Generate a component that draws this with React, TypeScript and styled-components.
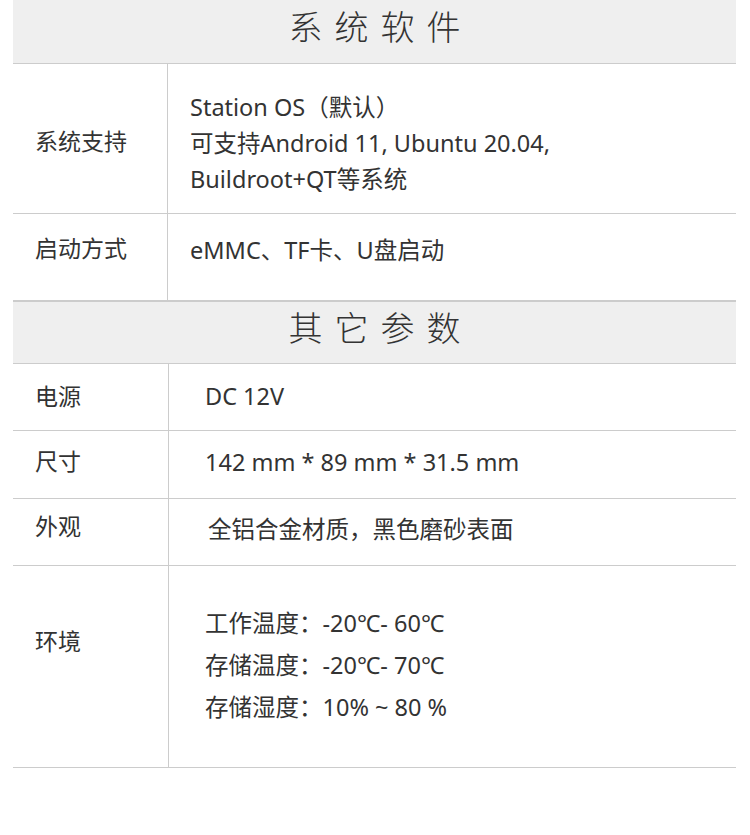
import React from 'react';
import styled, { createGlobalStyle } from 'styled-components';

const GlobalStyle = createGlobalStyle`
  html, body {
    margin: 0;
    padding: 0;
    background: #ffffff;
  }
  body {
    font-family: "Noto Sans", "Noto Sans CJK SC", sans-serif;
    color: #333333;
  }
`;

const Page = styled.div`
  width: 750px;
  height: 835px;
  padding: 0 14px 0 13px;
  box-sizing: border-box;
`;

const SectionHeader = styled.div<{ $top?: boolean; $height: number }>`
  height: ${(p) => p.$height}px;
  box-sizing: border-box;
  display: flex;
  align-items: center;
  justify-content: center;
  background: #efefef;
  border-top: ${(p) => (p.$top ? '1px solid #cccccc' : 'none')};
  border-bottom: 1px solid #cccccc;
  font-family: "Noto Sans CJK SC", sans-serif;
  font-size: 34px;
  font-weight: 300;
  letter-spacing: 12px;
  padding: 0 0 12px 12px;
  color: #333333;
`;

const Row = styled.div<{ $height: number; $labelWidth: number }>`
  display: grid;
  grid-template-columns: ${(p) => p.$labelWidth}px 1fr;
  height: ${(p) => p.$height}px;
  border-bottom: 1px solid #cccccc;
  box-sizing: border-box;
`;

// $nudge: positive pushes the text down, negative lifts it up
const nudge = (n?: number) =>
  n && n > 0 ? `padding-top: ${n}px;` : `padding-bottom: ${-(n ?? 0)}px;`;

const Label = styled.div<{ $nudge?: number }>`
  display: flex;
  align-items: center;
  padding-left: 22px;
  ${(p) => nudge(p.$nudge)}
  border-right: 1px solid #cccccc;
  font-size: 23px;
`;

const Value = styled.div<{ $indent: number; $lineHeight?: number; $nudge?: number }>`
  display: flex;
  flex-direction: column;
  justify-content: center;
  padding-left: ${(p) => p.$indent}px;
  ${(p) => nudge(p.$nudge)}
  font-size: 23.5px;
  line-height: ${(p) => p.$lineHeight ?? 30}px;
`;

export default function App() {
  return (
    <>
      <GlobalStyle />
      <Page>
        <SectionHeader $height={64}>系统软件</SectionHeader>
        <Row $height={150} $labelWidth={155}>
          <Label $nudge={2}>系统支持</Label>
          <Value $indent={22} $lineHeight={36} $nudge={8}>
            <span>Station OS（默认）</span>
            <span>可支持Android 11, Ubuntu 20.04,</span>
            <span>Buildroot+QT等系统</span>
          </Value>
        </Row>
        <Row $height={87} $labelWidth={155}>
          <Label $nudge={-20}>启动方式</Label>
          <Value $indent={22} $nudge={-14}>eMMC、TF卡、U盘启动</Value>
        </Row>
        <SectionHeader $top $height={63}>其它参数</SectionHeader>
        <Row $height={67} $labelWidth={156}>
          <Label $nudge={-4}>电源</Label>
          <Value $indent={36} $nudge={-2}>DC 12V</Value>
        </Row>
        <Row $height={68} $labelWidth={156}>
          <Label $nudge={-10}>尺寸</Label>
          <Value $indent={36} $nudge={-6}>142 mm * 89 mm * 31.5 mm</Value>
        </Row>
        <Row $height={67} $labelWidth={156}>
          <Label $nudge={-14}>外观</Label>
          <Value $indent={39} $nudge={-6}>全铝合金材质，黑色磨砂表面</Value>
        </Row>
        <Row $height={202} $labelWidth={156}>
          <Label $nudge={-54}>环境</Label>
          <Value $indent={36} $lineHeight={42} $nudge={-4}>
            <span>工作温度：-20℃- 60℃</span>
            <span>存储温度：-20℃- 70℃</span>
            <span>存储湿度：10% ~ 80 %</span>
          </Value>
        </Row>
      </Page>
    </>
  );
}
